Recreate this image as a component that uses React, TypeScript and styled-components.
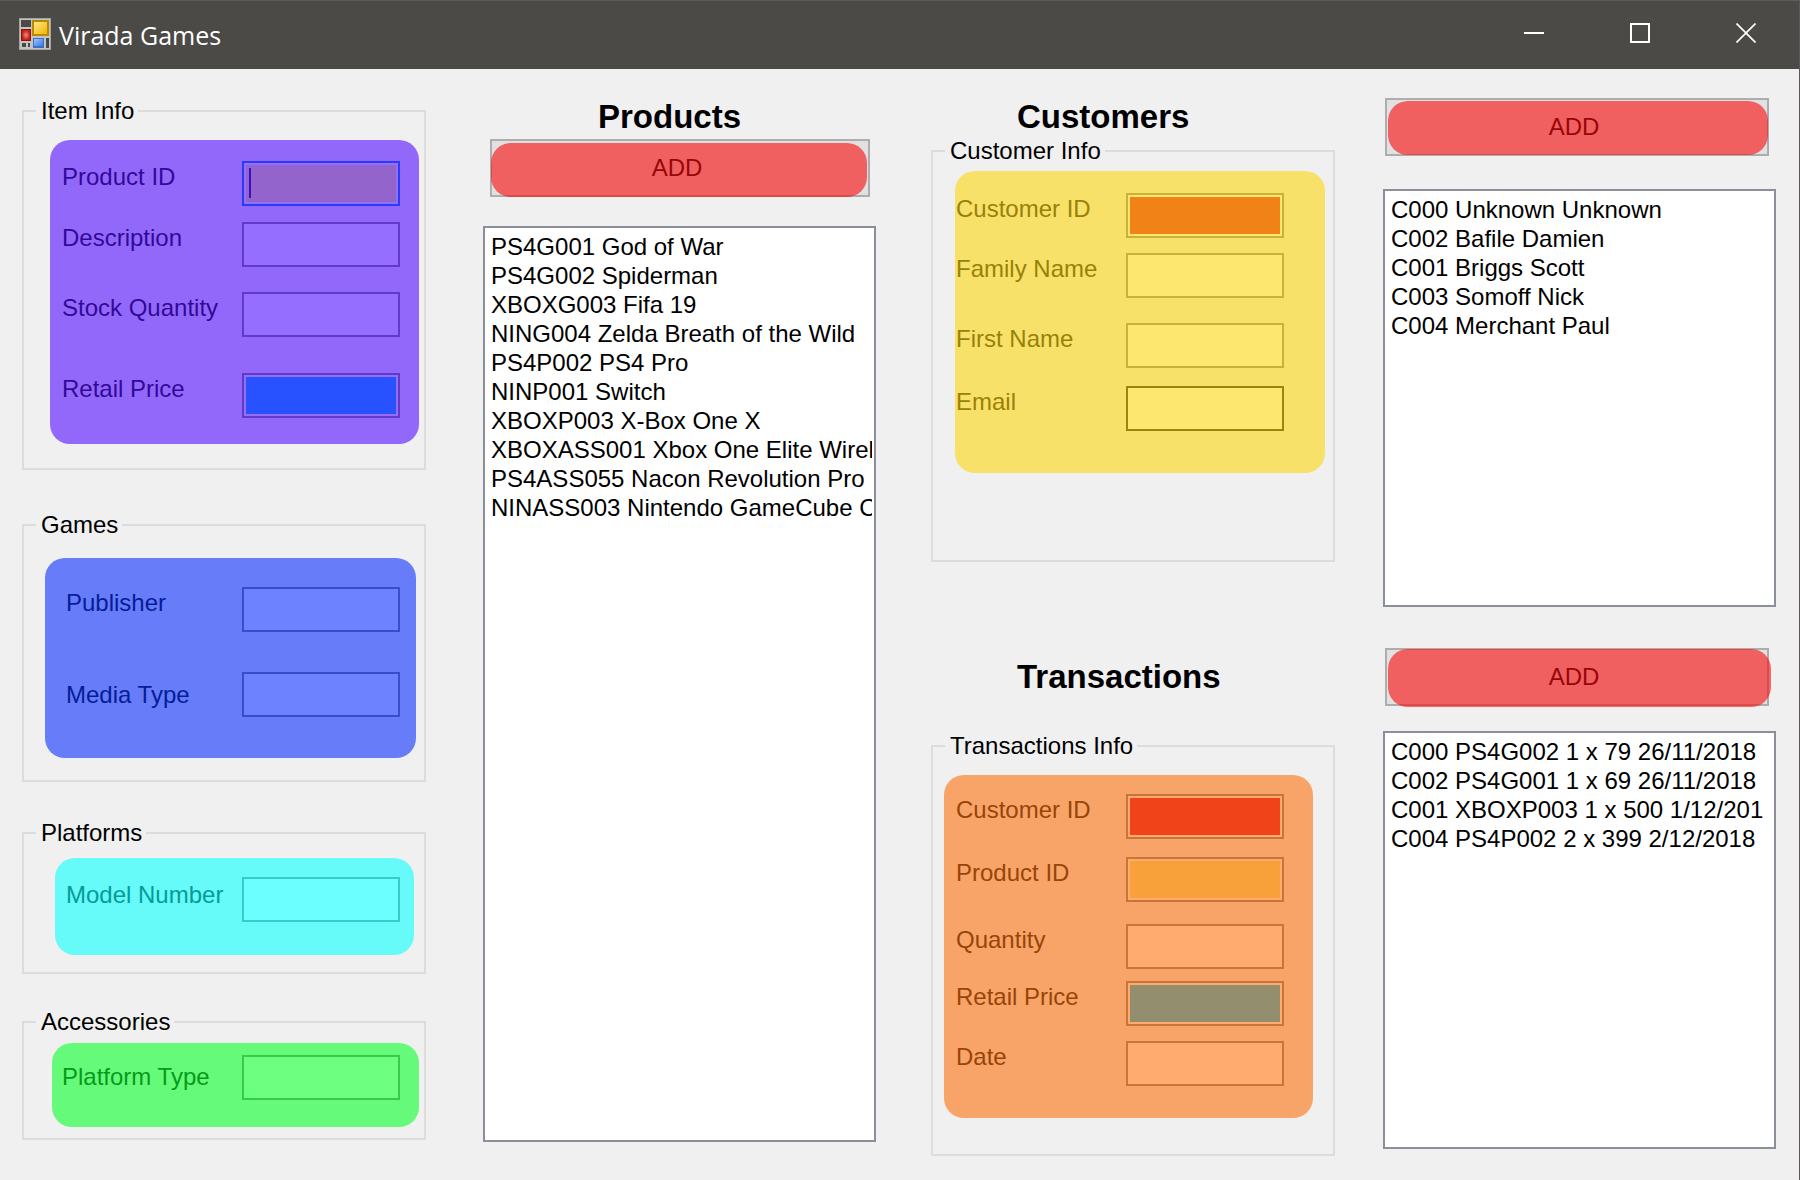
import React from "react";
import styled, { createGlobalStyle } from "styled-components";

const Global = createGlobalStyle`
  *, *::before, *::after { box-sizing: border-box; }
  body { margin: 0; background: #f0f0f0; }
  button, input { font: inherit; }
`;

type Tone = { panel: string; text: string; line: string; field: string };

const tones: Record<string, Tone> = {
  purple: { panel: "#9268fa", text: "#320899", line: "#6339ca", field: "#966eff" },
  blue: { panel: "#667cf8", text: "#061c98", line: "#374dc9", field: "#6c82ff" },
  cyan: { panel: "#66faf8", text: "#069a98", line: "#37cbc9", field: "#6cffff" },
  green: { panel: "#66fa7a", text: "#069a1a", line: "#37cb4b", field: "#6cff80" },
  yellow: { panel: "#f8e168", text: "#988108", line: "#c9b239", field: "#fee76e" },
  orange: { panel: "#f8a468", text: "#984408", line: "#c97539", field: "#ffaa6e" },
};

const Window = styled.div`
  display: flex;
  flex-direction: column;
  min-height: 100vh;
  background: #f0f0f0;
  border-right: 1px solid #5a5958;
  font-family: "Liberation Sans", Arial, sans-serif;
  font-size: 24px;
  line-height: 28px;
  color: #000;
`;

const TitleBar = styled.header`
  display: flex;
  align-items: flex-start;
  height: 69px;
  padding-left: 19px;
  background: #4b4a47;
  border-top: 1px solid #5d5c59;
`;

const AppIcon = styled.svg`
  width: 32px;
  height: 32px;
  margin-top: 17px;
  flex: none;
`;

const Title = styled.h1`
  flex: 1;
  margin: 0 0 0 8px;
  font-family: "Open Sans", "Noto Sans", sans-serif;
  font-size: 25px;
  font-weight: 400;
  line-height: 68px;
  color: #fff;
`;

const CaptionButton = styled.button`
  display: flex;
  align-items: center;
  justify-content: center;
  width: 106px;
  height: 64px;
  padding: 0;
  border: 0;
  background: transparent;
  color: #fff;
`;

const Form = styled.main`
  display: grid;
  grid-template-columns: 404fr 402fr 411fr 393fr;
  column-gap: 48px;
  align-items: start;
  padding: 28px 23px 24px 22px;
`;

const Column = styled.section<{ $indent?: number }>`
  display: flex;
  flex-direction: column;
  min-width: 0;
  padding-left: ${(p) => p.$indent ?? 0}px;
`;

const Heading = styled.h2<{ $indent: number; $above?: number }>`
  margin: ${(p) => p.$above ?? 0}px 0 0;
  padding-left: ${(p) => p.$indent}px;
  font-size: 33px;
  font-weight: 700;
  line-height: 40px;
`;

const Group = styled.fieldset<{ $above?: number }>`
  min-width: 0;
  margin: ${(p) => p.$above ?? 0}px 0 0;
  padding: 0;
  border: 2px solid #dcdcdc;
`;

const Caption = styled.legend`
  margin-left: 12px;
  padding: 0 4px 0 5px;
`;

const Panel = styled.div<{ $tone: Tone; $margin: string; $padding: string }>`
  margin: ${(p) => p.$margin};
  padding: ${(p) => p.$padding};
  border-radius: 20px;
  background: ${(p) => p.$tone.panel};
  color: ${(p) => p.$tone.text};
`;

const Row = styled.div<{ $above?: number }>`
  display: flex;
  justify-content: space-between;
  align-items: flex-start;
  margin-top: ${(p) => p.$above ?? 0}px;
`;

const Label = styled.label<{ $drop?: number }>`
  padding-top: ${(p) => p.$drop ?? 2}px;
  white-space: nowrap;
`;

const Field = styled.input<{ $tone: Tone; $fill?: string; $line?: string; $caret?: boolean }>`
  width: 158px;
  height: 45px;
  padding: 0 6px;
  border: 2px solid ${(p) => p.$line ?? p.$tone.line};
  border-radius: 0;
  outline: none;
  color: ${(p) => p.$tone.text};
  background-color: ${(p) => p.$fill ?? p.$tone.field};
  background-image: ${(p) => (p.$caret ? "linear-gradient(#3b10c0, #3b10c0)" : "none")};
  background-position: 5px 5px;
  background-size: 2px 30px;
  background-repeat: no-repeat;
  box-shadow: inset 0 0 0 2px ${(p) => p.$tone.field};
`;

const AddButton = styled.button<{ $margin: string; $cover: string }>`
  position: relative;
  height: 58px;
  margin: ${(p) => p.$margin};
  padding: 0 6px 0 0;
  border: 2px solid #adadad;
  background: #e1e1e1;
  color: #000;

  &::after {
    content: "";
    position: absolute;
    inset: ${(p) => p.$cover};
    border-radius: 20px;
    background: rgba(250, 10, 11, 0.6);
  }
`;

const ListBox = styled.ul<{ $height: number; $above: number }>`
  min-height: ${(p) => p.$height}px;
  margin: ${(p) => p.$above}px 0 0;
  padding: 4px 2px 4px 6px;
  border: 2px solid #8a8f99;
  background: #fff;
  list-style: none;
  line-height: 29px;
`;

const Item = styled.li`
  overflow: hidden;
  white-space: nowrap;
`;

type FieldSpec = {
  id: string;
  label: string;
  above?: number;
  drop?: number;
  fill?: string;
  line?: string;
  caret?: boolean;
};

type GroupProps = {
  title: string;
  tone: Tone;
  margin: string;
  padding: string;
  above?: number;
  fields: FieldSpec[];
};

function FieldGroup({ title, tone, margin, padding, above, fields }: GroupProps) {
  return (
    <Group $above={above}>
      <Caption>{title}</Caption>
      <Panel $tone={tone} $margin={margin} $padding={padding}>
        {fields.map((f) => (
          <Row key={f.id} $above={f.above}>
            <Label htmlFor={f.id} $drop={f.drop}>
              {f.label}
            </Label>
            <Field id={f.id} type="text" $tone={tone} $fill={f.fill} $line={f.line} $caret={f.caret} />
          </Row>
        ))}
      </Panel>
    </Group>
  );
}

type ListProps = { label: string; items: string[]; height: number; above: number };

function RecordList({ label, items, height, above }: ListProps) {
  return (
    <ListBox role="listbox" aria-label={label} $height={height} $above={above}>
      {items.map((text) => (
        <Item key={text} role="option" aria-selected={false}>
          {text}
        </Item>
      ))}
    </ListBox>
  );
}

function FormIcon() {
  return (
    <AppIcon viewBox="0 0 32 32" aria-hidden="true">
      <defs>
        <linearGradient id="gold" x1="0" y1="0" x2="1" y2="1">
          <stop offset="0" stopColor="#ffe88c" />
          <stop offset="1" stopColor="#f2b400" />
        </linearGradient>
        <radialGradient id="ruby">
          <stop offset="0" stopColor="#f08a80" />
          <stop offset="1" stopColor="#c3200f" />
        </radialGradient>
        <linearGradient id="sky" x1="0" y1="0" x2="1" y2="1">
          <stop offset="0" stopColor="#9cc4ff" />
          <stop offset="1" stopColor="#3a78e0" />
        </linearGradient>
      </defs>
      <rect width="32" height="32" fill="#a4a4a4" />
      <rect x="1" y="1" width="30" height="30" fill="#c4c4c4" />
      <rect x="2" y="2" width="10" height="7" fill="#4b4a47" />
      <rect x="13" y="2" width="17" height="16" fill="#b98a00" />
      <rect x="15" y="4" width="13" height="12" fill="url(#gold)" />
      <rect x="2" y="11" width="10" height="12" fill="#8f1408" />
      <rect x="3" y="12" width="8" height="10" fill="url(#ruby)" />
      <rect x="3" y="25" width="4" height="4" fill="#4b4a47" />
      <rect x="9" y="25" width="2" height="4" fill="#4b4a47" />
      <rect x="14" y="20" width="11" height="10" fill="#3c6fc8" />
      <rect x="15" y="21" width="9" height="7" fill="url(#sky)" />
      <rect x="27" y="20" width="3" height="10" fill="#4b4a47" />
    </AppIcon>
  );
}

const products = [
  "PS4G001 God of War",
  "PS4G002 Spiderman",
  "XBOXG003 Fifa 19",
  "NING004 Zelda Breath of the Wild",
  "PS4P002 PS4 Pro",
  "NINP001 Switch",
  "XBOXP003 X-Box One X",
  "XBOXASS001 Xbox One Elite Wirele",
  "PS4ASS055 Nacon Revolution Pro",
  "NINASS003 Nintendo GameCube C",
];

const customers = [
  "C000 Unknown Unknown",
  "C002 Bafile Damien",
  "C001 Briggs Scott",
  "C003 Somoff Nick",
  "C004 Merchant Paul",
];

const transactions = [
  "C000 PS4G002 1 x 79 26/11/2018",
  "C002 PS4G001 1 x 69 26/11/2018",
  "C001 XBOXP003 1 x 500 1/12/201",
  "C004 PS4P002 2 x 399 2/12/2018",
];

export default function App() {
  return (
    <>
      <Global />
      <Window>
        <TitleBar>
          <FormIcon />
          <Title>Virada Games</Title>
          <CaptionButton type="button" aria-label="Minimize">
            <svg width="20" height="20" viewBox="0 0 20 20">
              <path d="M0 10H20" stroke="currentColor" strokeWidth="2" />
            </svg>
          </CaptionButton>
          <CaptionButton type="button" aria-label="Maximize">
            <svg width="20" height="20" viewBox="0 0 20 20">
              <rect x="1" y="1" width="18" height="18" fill="none" stroke="currentColor" strokeWidth="2" />
            </svg>
          </CaptionButton>
          <CaptionButton type="button" aria-label="Close">
            <svg width="20" height="20" viewBox="0 0 20 20">
              <path d="M0.5 0.5L19.5 19.5M19.5 0.5L0.5 19.5" stroke="currentColor" strokeWidth="1.7" />
            </svg>
          </CaptionButton>
        </TitleBar>

        <Form>
          <Column>
            <FieldGroup
              title="Item Info"
              tone={tones.purple}
              margin="15px 5px 24px 26px"
              padding="21px 19px 26px 12px"
              fields={[
                { id: "item-product", label: "Product ID", fill: "#9264cc", line: "#2a3cf6", caret: true },
                { id: "item-description", label: "Description", above: 16 },
                { id: "item-stock", label: "Stock Quantity", above: 25 },
                { id: "item-price", label: "Retail Price", above: 36, fill: "#2852ff" },
              ]}
            />
            <FieldGroup
              title="Games"
              tone={tones.blue}
              above={41}
              margin="19px 8px 22px 21px"
              padding="29px 16px 41px 21px"
              fields={[
                { id: "game-publisher", label: "Publisher" },
                { id: "game-media", label: "Media Type", above: 40, drop: 9 },
              ]}
            />
            <FieldGroup
              title="Platforms"
              tone={tones.cyan}
              above={37}
              margin="11px 10px 17px 31px"
              padding="19px 14px 33px 11px"
              fields={[{ id: "platform-model", label: "Model Number", drop: 4 }]}
            />
            <FieldGroup
              title="Accessories"
              tone={tones.green}
              above={34}
              margin="7px 5px 11px 28px"
              padding="12px 19px 27px 10px"
              fields={[{ id: "accessory-platform", label: "Platform Type", drop: 8 }]}
            />
          </Column>

          <Column $indent={9}>
            <Heading $indent={115}>Products</Heading>
            <AddButton type="button" $margin="2px 6px 0 7px" $cover="2px 1px -2px -1px">
              ADD
            </AddButton>
            <RecordList label="Products" items={products} height={916} above={29} />
          </Column>

          <Column $indent={7}>
            <Heading $indent={86}>Customers</Heading>
            <FieldGroup
              title="Customer Info"
              tone={tones.yellow}
              margin="6px 8px 87px 22px"
              padding="22px 41px 42px 1px"
              fields={[
                { id: "customer-id", label: "Customer ID", fill: "#f08218" },
                { id: "customer-family", label: "Family Name", above: 15 },
                { id: "customer-first", label: "First Name", above: 25 },
                { id: "customer-email", label: "Email", above: 18, line: "#9b8410" },
              ]}
            />
            <Heading $indent={86} $above={95}>
              Transactions
            </Heading>
            <FieldGroup
              title="Transactions Info"
              tone={tones.orange}
              above={35}
              margin="15px 20px 36px 11px"
              padding="19px 29px 32px 12px"
              fields={[
                { id: "transaction-customer", label: "Customer ID", fill: "#f0431a" },
                { id: "transaction-product", label: "Product ID", above: 18, fill: "#f8a03a" },
                { id: "transaction-quantity", label: "Quantity", above: 22 },
                { id: "transaction-price", label: "Retail Price", above: 12, fill: "#928e6e" },
                { id: "transaction-date", label: "Date", above: 15 },
              ]}
            />
          </Column>

          <Column>
            <AddButton type="button" $margin="1px 7px 0 2px" $cover="1px -1px -1px 1px">
              ADD
            </AddButton>
            <RecordList label="Customers" items={customers} height={418} above={33} />
            <AddButton type="button" $margin="41px 7px 0 2px" $cover="-1px -4px -3px 1px">
              ADD
            </AddButton>
            <RecordList label="Transactions" items={transactions} height={418} above={25} />
          </Column>
        </Form>
      </Window>
    </>
  );
}
